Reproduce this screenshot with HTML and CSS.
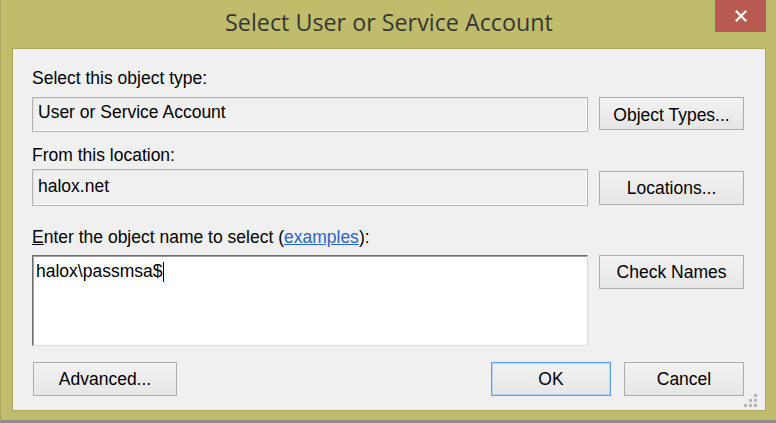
FILE: index.html
```html
<!DOCTYPE html>
<html>
<head>
<meta charset="utf-8">
<title>Select User or Service Account</title>
<link rel="stylesheet" href="styles.css">
</head>
<body>
<div class="window">
  <div class="titlebar">
    <div class="tb-side"></div>
    <div class="title">Select User or Service Account</div>
    <div class="tb-side tb-right">
      <div class="close">
        <svg width="12" height="12" viewBox="0 0 12 12"><path d="M1.5 1.5 L10.5 10.5 M10.5 1.5 L1.5 10.5" stroke="#fff" stroke-width="2.2" stroke-linecap="square"/></svg>
      </div>
    </div>
  </div>
  <div class="client">
    <div class="label l1">Select this object type:</div>
    <div class="row r1">
      <div class="field f1">User or Service Account</div>
      <div class="btn b1">Object Types...</div>
    </div>
    <div class="label l2">From this location:</div>
    <div class="row r2">
      <div class="field f2">halox.net</div>
      <div class="btn b2">Locations...</div>
    </div>
    <div class="label l3"><span class="u">E</span>nter the object name to select (<span class="link">examples</span>):</div>
    <div class="row r3">
      <div class="names">halox\passmsa$<span class="caret"></span></div>
      <div class="btn b3">Check Names</div>
    </div>
    <div class="row bottom">
      <div class="btn adv">Advanced...</div>
      <div class="spacer"></div>
      <div class="btn ok">OK</div>
      <div class="btn cancel">Cancel</div>
    </div>
    <svg class="grip" width="14" height="14" viewBox="0 0 14 14">
      <rect x="10" y="0" width="3" height="3" fill="#b6b6b6"/>
      <rect x="5" y="5" width="3" height="3" fill="#b6b6b6"/>
      <rect x="10" y="5" width="3" height="3" fill="#b6b6b6"/>
      <rect x="0" y="10" width="3" height="3" fill="#b6b6b6"/>
      <rect x="5" y="10" width="3" height="3" fill="#b6b6b6"/>
      <rect x="10" y="10" width="3" height="3" fill="#b6b6b6"/>
    </svg>
  </div>
</div>
</body>
</html>
```

FILE: styles.css
```css
html, body {
  margin: 0;
  padding: 0;
}
body {
  width: 776px;
  height: 423px;
  overflow: hidden;
  background: #bfbc6b;
  font-family: "Liberation Sans", Arial, sans-serif;
}
.window {
  box-sizing: border-box;
  width: 776px;
  height: 423px;
  background: #bfbc6b;
  border-left: 1px solid #a9a55b;
  border-bottom: 3px solid #8d8d88;
  padding: 0 10px 9px 11px;
  display: flex;
  flex-direction: column;
}
.titlebar {
  height: 48px;
  display: grid;
  grid-template-columns: 1fr auto 1fr;
  align-items: start;
}
.title {
  font-family: "Open Sans", "Noto Sans", sans-serif;
  font-size: 23.3px;
  color: #363636;
  line-height: 28px;
  padding-top: 8px;
  white-space: nowrap;
}
.tb-right {
  display: flex;
  justify-content: flex-end;
}
.close {
  width: 51px;
  height: 32px;
  background: #b85a51;
  display: flex;
  align-items: center;
  justify-content: center;
}
.client {
  position: relative;
  flex: 1;
  background: #f0f0f0;
  border: 1px solid #aba75e;
  padding: 19px 21px 0 19px;
  display: flex;
  flex-direction: column;
  color: #000;
  font-size: 17.5px;
}
.label {
  height: 20px;
  line-height: 20px;
  white-space: nowrap;
}
.l2 { margin-top: 13px; }
.l3 { margin-top: 21px; }
.u { text-decoration: underline; }
.link {
  color: #2b64c8;
  text-decoration: underline;
}
.row {
  display: flex;
  align-items: flex-start;
  gap: 11px;
}
.r1 { margin-top: 9px; }
.r2 { margin-top: 4px; align-items: center; }
.r3 { margin-top: 8px; }
.field {
  box-sizing: border-box;
  width: 556px;
  background: #f0f0f0;
  border: 1px solid #b4b4b4;
  box-shadow: inset -1px -1px 0 #ffffff, inset 1px 1px 0 #e2e2e2;
  padding: 0 0 0 5px;
  display: flex;
  align-items: center;
  white-space: nowrap;
}
.f1 { height: 35px; padding-bottom: 4px; }
.f2 { height: 37px; padding-bottom: 3px; }
.names {
  box-sizing: border-box;
  width: 556px;
  height: 91px;
  background: #ffffff;
  border-top: 1px solid #6f6f6f;
  border-left: 1px solid #6f6f6f;
  border-right: 1px solid #d9d9d9;
  border-bottom: 1px solid #d9d9d9;
  box-shadow: inset 1px 1px 0 #a0a0a0;
  padding: 4px 0 0 3px;
  line-height: 22px;
  white-space: nowrap;
}
.caret {
  display: inline-block;
  width: 1px;
  height: 20px;
  background: #000;
  vertical-align: -5px;
  margin-left: 1px;
}
.btn {
  box-sizing: border-box;
  width: 145px;
  height: 34px;
  border: 1px solid #acacac;
  background: linear-gradient(#f2f2f2, #e6e6e6);
  display: flex;
  align-items: center;
  justify-content: center;
  white-space: nowrap;
}
.b1 { height: 33px; padding-top: 3px; }
.b2 { padding-top: 1px; }
.bottom {
  margin-top: 16px;
  gap: 0;
}
.adv {
  width: 144px;
  margin-left: 1px;
}
.spacer { flex: 1; }
.ok {
  width: 120px;
  border-color: #5b9ee8;
  box-shadow: inset 0 0 0 1px #b9d7f6;
  margin-right: 13px;
}
.cancel {
  width: 120px;
}
.grip {
  position: absolute;
  right: 7px;
  bottom: 2px;
}
```
